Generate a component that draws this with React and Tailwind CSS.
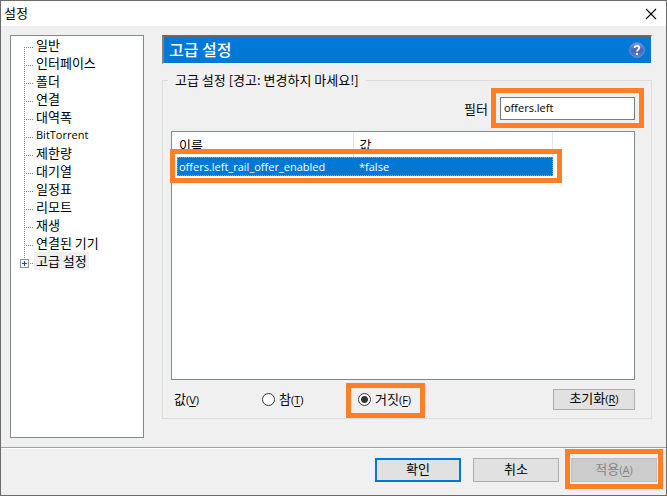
const categories = [
  '일반', '인터페이스', '폴더', '연결', '대역폭', 'BitTorrent', '제한량',
  '대기열', '일정표', '리모트', '재생', '연결된 기기', '고급 설정',
];

const preferences = [{ name: 'offers.left_rail_offer_enabled', value: '*false' }];

const latin = "font-['Open_Sans',sans-serif] text-[11px]";

function Key({ children }) {
  return <span className={latin}>(<u className="underline-offset-2">{children}</u>)</span>;
}

function Connector({ first, last }) {
  return (
    <svg width="14" height="18" viewBox="0 0 14 18" className="shrink-0" shapeRendering="crispEdges" aria-hidden="true">
      <path
        d={first ? 'M4.5 11V18' : last ? 'M4.5 1V7' : 'M4.5 1V18'}
        stroke="#808080" strokeDasharray="1 1" fill="none"
      />
      <path d={last ? 'M10 11.5H14' : 'M4 11.5H14'} stroke="#808080" strokeDasharray="1 1" fill="none" />
      {last && (
        <>
          <rect x="0.5" y="7.5" width="8" height="8" rx="1" fill="#f8f8f8" stroke="#919191" />
          <path d="M2 11.5H7M4.5 9V14" stroke="#2b4a9b" />
        </>
      )}
    </svg>
  );
}

function Highlight({ className }) {
  return <span className={`pointer-events-none absolute border-5 border-[#ff7f27] ${className}`} />;
}

function Radio({ label, mnemonic, checked, highlight }) {
  return (
    <label className="relative flex w-24 items-center gap-1 whitespace-nowrap">
      <input
        type="radio"
        name="value"
        defaultChecked={checked}
        className="size-[13px] shrink-0 appearance-none rounded-full border border-[#333] bg-white checked:bg-[radial-gradient(circle,#333_3px,#fff_4px)]"
      />
      <span>{label}<Key>{mnemonic}</Key></span>
      {highlight && <Highlight className="-top-[7px] -left-3 h-[35px] w-[79px]" />}
    </label>
  );
}

function FooterButton({ className, children, ...rest }) {
  return (
    <button type="button" className={`flex h-6 w-[86px] items-center justify-center pb-[2px] ${className}`} {...rest}>
      <span>{children}</span>
    </button>
  );
}

export default function App() {
  return (
    <main className="flex min-h-screen flex-col border border-[#6b6b6b] bg-[#f0f0f0] font-['Noto_Sans_CJK_KR',sans-serif] text-[13px] leading-[18px] text-black">
      <header className="flex h-[25px] items-center justify-between bg-white pr-[9px] pl-[3px]">
        <h1 className="pb-[2px]">설정</h1>
        <button type="button" aria-label="닫기">
          <svg width="12" height="12" viewBox="0 0 12 12" aria-hidden="true">
            <path d="M1 1L11 11M11 1L1 11" stroke="#000" strokeWidth="1.1" />
          </svg>
        </button>
      </header>

      <div className="flex flex-1 gap-[18px] pt-[9px] pr-[14px] pb-[9px] pl-[9px]">
        <nav className="w-[134px] shrink-0 border border-[#828790] bg-white pl-[9px]">
          <ul>
            {categories.map((name, i) => {
              const last = i === categories.length - 1;
              return (
                <li key={name} className="flex">
                  <Connector first={i === 0} last={last} />
                  <button
                    type="button"
                    className={`h-[18px] px-[2px] text-left whitespace-nowrap ${last ? 'bg-[#f0f0f0]' : ''} ${name === 'BitTorrent' ? latin : ''}`}
                  >
                    {name}
                  </button>
                </li>
              );
            })}
          </ul>
        </nav>

        <section className="flex min-w-0 flex-1 flex-col pb-[19px]">
          <div className="flex h-[29px] items-center justify-between border-t-2 border-r border-b border-l-2 border-t-[#696969] border-r-white border-b-white border-l-[#808080] bg-[#0078d7] pr-[6px] pl-[5px]">
            <h2 className="pb-[2px] text-base leading-5 font-medium text-white">고급 설정</h2>
            <button type="button" aria-label="도움말">
              <svg width="16" height="16" viewBox="0 0 16 16" aria-hidden="true">
                <defs>
                  <linearGradient id="help" x1="0" y1="0" x2="0" y2="1">
                    <stop offset="0" stopColor="#8399d2" />
                    <stop offset="0.5" stopColor="#4264b8" />
                    <stop offset="1" stopColor="#5b86d8" />
                  </linearGradient>
                </defs>
                <circle cx="8" cy="8" r="7.3" fill="url(#help)" stroke="#6f8fd6" />
                <path d="M5.6 6.1C5.6 3.3 10.3 3.2 10.3 5.8C10.3 7.6 8 7.6 8 9.6" fill="none" stroke="#fff" strokeWidth="1.8" />
                <rect x="7" y="11" width="2" height="2" fill="#fff" />
              </svg>
            </button>
          </div>

          <fieldset className="mt-[7px] flex min-w-0 flex-1 flex-col border border-[#dcdcdc] pr-4 pb-2 pl-2">
            <legend className="-ml-[3px] px-[7px]">고급 설정 [경고: 변경하지 마세요!]</legend>

            <div className="mt-2 flex items-center justify-end gap-3">
              <label htmlFor="filter">필터</label>
              <div className="relative">
                <input
                  id="filter"
                  type="text"
                  defaultValue="offers.left"
                  className={`block h-[23px] w-[135px] border border-[#7a7a7a] bg-white px-[3px] pb-[2px] outline-none ${latin}`}
                />
                <Highlight className="-top-[9px] -right-[9px] -bottom-2 -left-[9px]" />
              </div>
            </div>

            <div className="mt-[11px] flex-1 border border-[#828790] bg-white pl-[5px]">
              <div className="relative w-[376px]">
                <table className="w-full table-fixed border-collapse text-left">
                  <thead>
                    <tr className="h-[25px]">
                      <th scope="col" className="w-[176px] border-r border-[#e5e5e5] p-0 pl-[2px] font-normal">이름</th>
                      <th scope="col" className="border-r border-[#e5e5e5] p-0 pl-[6px] font-normal">값</th>
                    </tr>
                  </thead>
                  <tbody className={latin}>
                    {preferences.map((p) => (
                      <tr key={p.name} className="h-[19px] bg-[#0078d7] text-white outline-1 -outline-offset-1 outline-dotted outline-[#ff8728]">
                        <td className="p-0 pl-[2px]">{p.name}</td>
                        <td className="p-0 pl-[6px]">{p.value}</td>
                      </tr>
                    ))}
                  </tbody>
                </table>
                <Highlight className="-right-[9px] -bottom-[7px] -left-[7px] h-[34px]" />
              </div>
            </div>

            <div className="mt-[9px] flex h-[21px] items-center">
              <span className="w-[91px] pl-[3px]">값<Key>V</Key></span>
              <Radio label="참" mnemonic="T" />
              <Radio label="거짓" mnemonic="F" checked highlight />
              <button type="button" className="ml-auto flex h-[21px] w-[82px] items-center justify-center border border-[#adadad] bg-[#e1e1e1] pb-[2px]">
                <span>초기화<Key>R</Key></span>
              </button>
            </div>
          </fieldset>
        </section>
      </div>

      <footer className="border-t border-[#a0a0a0]">
        <div className="flex justify-end gap-3 border-t border-white pt-[9px] pr-[9px] pb-[13px]">
          <FooterButton className="border-2 border-[#0078d7] bg-[#e1e1e1]">확인</FooterButton>
          <FooterButton className="border border-[#adadad] bg-[#e1e1e1]">취소</FooterButton>
          <div className="relative">
            <FooterButton disabled className="border border-[#bfbfbf] bg-[#ccc] text-[#838383]">
              적용<Key>A</Key>
            </FooterButton>
            <Highlight className="-top-[9px] -right-[6px] -bottom-[7px] -left-[6px]" />
          </div>
        </div>
      </footer>
    </main>
  );
}
